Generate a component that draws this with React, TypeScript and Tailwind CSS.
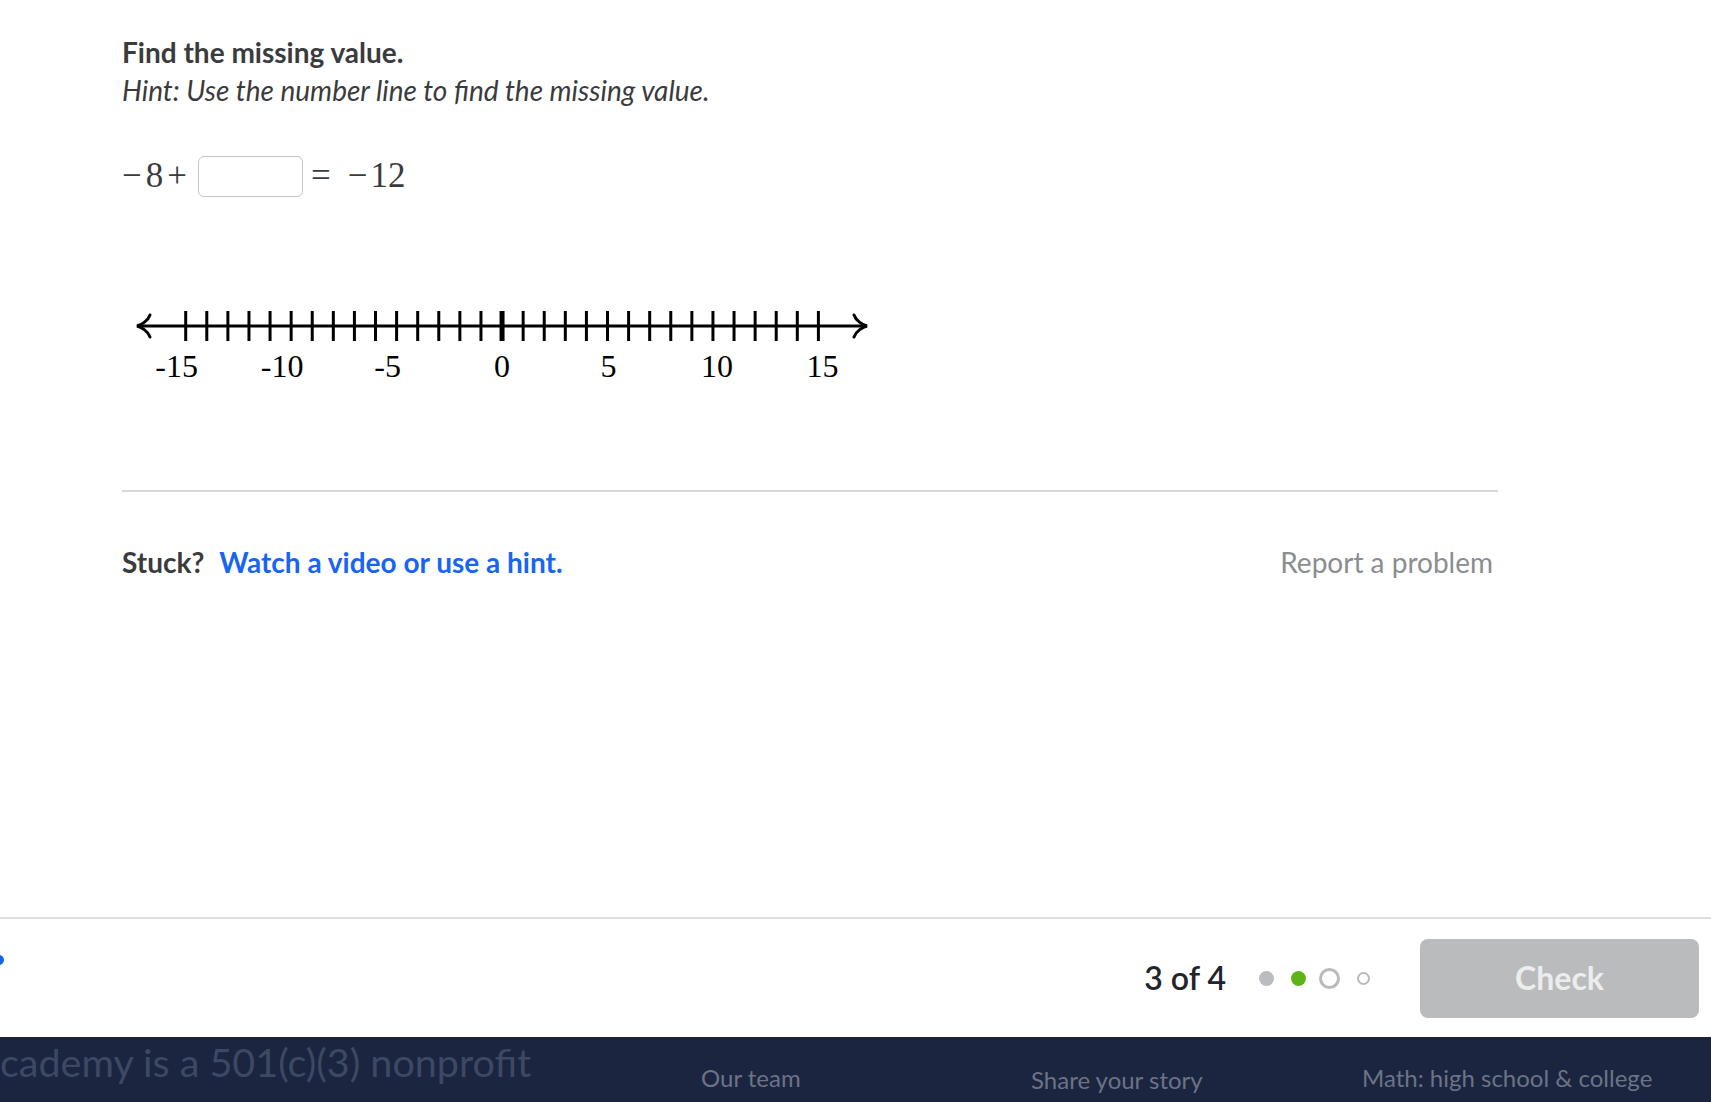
import React from 'react';

const TICK0 = 63.7;
const STEP = 21.09;

const NumberLine = () => {
    const ticks = Array.from({ length: 31 }, (_, i) => i - 15);
    const labels = [-15, -10, -5, 0, 5, 10, 15];
    const tx = (v: number) => TICK0 + (v + 15) * STEP;

    return (
        <svg width="760" height="95" viewBox="0 0 760 95" className="block">
            <line x1="15" y1="27" x2="745" y2="27" stroke="#000" strokeWidth="3" />
            <path d="M28 16 C26 22 19 26 15 27 C19 28 26 32 28 38" fill="none" stroke="#000" strokeWidth="3" strokeLinecap="round" />
            <path d="M732 16 C734 22 741 26 745 27 C741 28 734 32 732 38" fill="none" stroke="#000" strokeWidth="3" strokeLinecap="round" />
            {ticks.map((v) => (
                <line key={v} x1={tx(v)} y1="12" x2={tx(v)} y2="42" stroke="#000" strokeWidth={v === 0 ? 5 : 3} />
            ))}
            {labels.map((v) => (
                <text
                    key={v}
                    x={tx(v) + (v < 0 ? -9 : v === 0 ? 0 : v === 5 ? 1 : 4)}
                    y="78"
                    textAnchor="middle"
                    fontFamily="'Liberation Serif', serif"
                    fontSize="32"
                    fill="#000"
                >
                    {v < 0 ? `-${-v}` : v}
                </text>
            ))}
        </svg>
    );
};

export default function App() {
    return (
        <div className="w-full h-[1102px] overflow-hidden bg-white flex flex-col font-['Lato',sans-serif]">
            {/* Exercise */}
            <div className="h-[917px] shrink-0 pl-[122px] pr-[213px] pt-[36px]">
                <p className="text-[28px] leading-[32px] font-bold text-[#3a3b3d]">Find the missing value.</p>
                <p className="mt-[6px] text-[28px] leading-[32px] italic text-[#3a3b3d]">
                    Hint: Use the number line to find the missing value.
                </p>

                <div className="mt-[50px] h-[41px] flex items-center font-['Liberation_Serif',serif] text-[35px] leading-[41px] text-[#3a3b3d]">
                    <span className="-mt-[3px]">−</span>
                    <span className="-mt-[3px] ml-[4px]">8</span>
                    <span className="-mt-[3px] ml-[4px]">+</span>
                    <span className="ml-[11px] w-[105px] h-[41px] rounded-[6px] border-[1.5px] border-[#c4c6c8] bg-white"></span>
                    <span className="-mt-[3px] ml-[8px]">=</span>
                    <span className="-mt-[3px] ml-[17px]">−</span>
                    <span className="-mt-[3px] ml-[3px]">12</span>
                </div>

                <div className="mt-[102px]">
                    <NumberLine />
                </div>

                <div className="mt-[96px] h-[2px] bg-[#d8d9db]" />

                <div className="mt-[54px] flex items-center justify-between text-[28px] leading-[32px]">
                    <p>
                        <span className="font-bold text-[#3a3b3d]">Stuck?</span>
                        <span className="ml-[15px] font-bold text-[#1865f2]">Watch a video or use a hint.</span>
                    </p>
                    <span className="mr-[5px] text-[#8a8d91]">Report a problem</span>
                </div>
            </div>

            {/* Progress bar */}
            <div className="h-[120px] shrink-0 border-t-2 border-[#dcdddf] flex items-center relative">
                <span className="absolute -left-[6px] top-[36px] w-[10px] h-[10px] rounded-full bg-[#1865f2]" />
                <div className="ml-auto flex items-center">
                    <span className="text-[32px] leading-[40px] font-semibold text-[#21242c]">3 of 4</span>
                    <span className="ml-[33px] w-[15px] h-[15px] rounded-full bg-[#bbbcbf]" />
                    <span className="ml-[17px] w-[15px] h-[15px] rounded-full bg-[#5fb31a]" />
                    <span className="ml-[13px] w-[21px] h-[21px] rounded-full border-[3px] border-[#b9babc]" />
                    <span className="ml-[17px] w-[13px] h-[13px] rounded-full border-[2.5px] border-[#b9babc]" />
                    <button className="ml-[50px] mr-[12px] w-[279px] h-[79px] rounded-[8px] bg-[#babbbd] text-[32px] font-bold text-[#eceded]">
                        Check
                    </button>
                </div>
            </div>

            {/* Footer */}
            <div className="flex-1 bg-[#1b2540] flex items-start">
                <div className="w-[701px] shrink-0 whitespace-nowrap">
                    <p className="text-[39.5px] leading-[48px] pt-[1px] text-[#3d4862]">cademy is a 501(c)(3) nonprofit</p>
                </div>
                <div className="w-[330px] shrink-0 pt-[26px] text-[24px] leading-[30px] text-[#6c7386]">Our team</div>
                <div className="w-[331px] shrink-0 pt-[28px] text-[24px] leading-[30px] text-[#6c7386]">Share your story</div>
                <div className="pt-[26px] whitespace-nowrap text-[24px] leading-[30px] text-[#6c7386]">Math: high school &amp; college</div>
            </div>
        </div>
    );
}
